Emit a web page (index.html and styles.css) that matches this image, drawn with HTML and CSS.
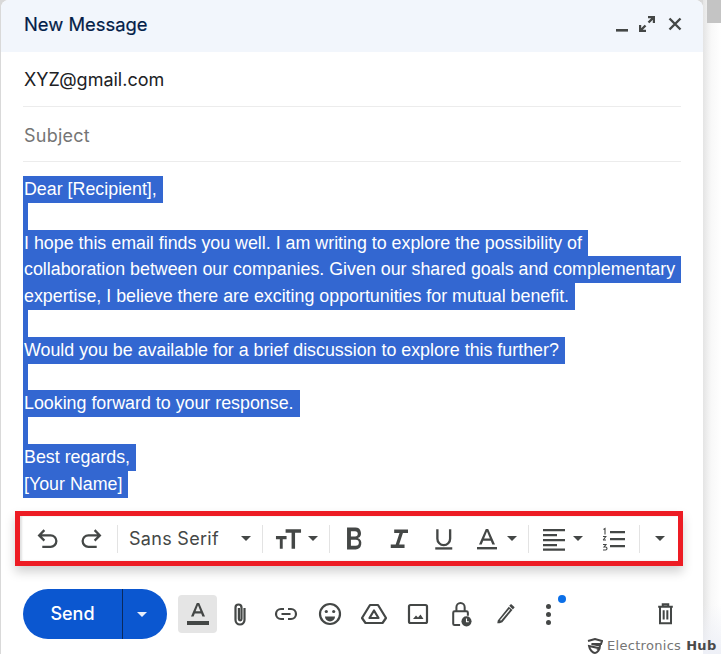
FILE: index.html
```html
<!DOCTYPE html>
<html lang="en">
<head>
<meta charset="utf-8">
<title>New Message</title>
<link rel="stylesheet" href="styles.css">
</head>
<body>
<div class="backdrop"><span class="corner"></span></div>
<main class="compose">
  <header class="head">
    <h1 class="title">New Message</h1>
    <div class="win">
      <svg class="w-min" viewBox="0 0 12 12"><rect x="0" y="9" width="12" height="2.6" fill="#444746"/></svg>
      <svg class="w-exp" viewBox="0 0 16 16"><path d="M9 1h6v6M15 1L9.5 6.5M7 15H1V9M1 15l5.5-5.5" fill="none" stroke="#444746" stroke-width="2.4"/></svg>
      <svg class="w-x" viewBox="0 0 14 14"><path d="M1.5 1.5l11 11M12.5 1.5l-11 11" fill="none" stroke="#444746" stroke-width="2.4"/></svg>
    </div>
  </header>
  <div class="field to">XYZ@gmail.com</div>
  <div class="field subject">Subject</div>
  <div class="body">
    <div class="ln"><span>Dear [Recipient],</span></div>
    <div class="ln blank"><span></span></div>
    <div class="ln"><span>I hope this email finds you well. I am writing to explore the possibility of</span></div>
    <div class="ln"><span>collaboration between our companies. Given our shared goals and complementary</span></div>
    <div class="ln"><span>expertise, I believe there are exciting opportunities for mutual benefit.</span></div>
    <div class="ln blank"><span></span></div>
    <div class="ln"><span>Would you be available for a brief discussion to explore this further?</span></div>
    <div class="ln blank"><span></span></div>
    <div class="ln"><span>Looking forward to your response.</span></div>
    <div class="ln blank"><span></span></div>
    <div class="ln"><span>Best regards,</span></div>
    <div class="ln"><span>[Your Name]</span></div>
  </div>
  <div class="toolbar">
    <button class="tb t-undo"><svg viewBox="0 0 24 24"><path d="M9 5L4 10l5 5M4.500 10H15a5.500 5.500 0 0 1 0 11H7" transform="translate(0 -1)" class="ic"/></svg></button>
    <button class="tb t-redo"><svg viewBox="0 0 24 24"><path d="M15 5l5 5-5 5M19.500 10H9a5.500 5.500 0 0 0 0 11h8" transform="translate(0 -1)" class="ic"/></svg></button>
    <i class="sep s1"></i>
    <div class="font">Sans Serif</div><i class="caret c-font"></i>
    <i class="sep"></i>
    <button class="tb t-size"><svg viewBox="0 0 28 24"><path d="M1 9h11v3.200H8V22H5v-9.800H1zM11 2h16v3.400h-6.200V22h-3.600V5.400H11z" fill="#444746"/></svg></button><i class="caret c-size"></i>
    <i class="sep"></i>
    <button class="tb t-b"><svg viewBox="0 0 24 24"><path d="M7 3.500h6.500a4.300 4.300 0 0 1 1.800 8.200 4.600 4.600 0 0 1-1.600 8.800H7zM10 6.300v4.200h3.200a2.100 2.100 0 0 0 0-4.200zM10 13v4.700h3.800a2.350 2.350 0 0 0 0-4.700z" fill="#444746" fill-rule="evenodd"/></svg></button>
    <button class="tb t-i"><svg viewBox="0 0 24 24"><path d="M8 4h12v3h-4.400l-3.300 10H17v3H5v-3h4.300l3.300-10H8z" fill="#444746"/></svg></button>
    <button class="tb t-u"><svg viewBox="0 0 24 24"><path d="M6 3v9a6 6 0 0 0 12 0V3" class="ic"/><rect x="4" y="20" width="16" height="2.200" fill="#444746"/></svg></button>
    <button class="tb t-a"><svg viewBox="0 0 24 24"><path d="M4 17.500L10.800 2h2.400L20 17.500h-2.700l-1.500-3.700H8.200l-1.500 3.700zM9.100 11.400h5.800L12 4.600z" fill="#444746" fill-rule="evenodd"/><rect x="2" y="20" width="20" height="2.400" fill="#444746"/></svg></button><i class="caret c-a"></i>
    <i class="sep"></i>
    <button class="tb t-al"><svg viewBox="0 0 24 24"><path d="M1 2h22v2.200H1zM1 7h14v2.200H1zM1 12h22v2.200H1zM1 17h14v2.200H1zM1 21.600h22v2.200H1z" fill="#444746"/></svg></button><i class="caret c-al"></i>
    <button class="tb t-ol"><svg viewBox="0 0 24 24"><path d="M8 4h15v2.200H8zM8 11h15v2.200H8zM8 18h15v2.200H8z" fill="#444746"/><path d="M1.500 2.500L3 1.500v6M1 13h3M1 9.500h2.800L1.200 13M1 17.500h3L2 20h1.500a1.400 1.400 0 0 1 0 3H1" fill="none" stroke="#444746" stroke-width="1.100"/></svg></button>
    <i class="sep s-last"></i>
    <i class="caret c-more"></i>
  </div>
  <footer class="foot">
    <div class="send"><span class="send-l">Send</span><span class="send-r"><i class="caret white"></i></span></div>
    <span class="fmt"><svg viewBox="0 0 24 24"><path d="M5 14.500L10.800 1h2.400L19 14.500h-2.600l-1.200-3.100H8.800l-1.200 3.100zM9.600 9.300h4.800L12 3.300z" fill="#444746" fill-rule="evenodd"/><rect x="1" y="19" width="22" height="4" fill="#444746"/></svg></span>
    <svg class="fi f-clip" viewBox="0 0 16 24"><path d="M12.500 6v12a4.500 4.500 0 0 1-9 0V5.500a3 3 0 0 1 6 0V17a1.300 1.300 0 0 1-2.600 0V6" class="ic2"/></svg>
    <svg class="fi f-link" viewBox="0 0 24 24"><path d="M10 7H7a5 5 0 0 0 0 10h3M14 7h3a5 5 0 0 1 0 10h-3M7.500 12h9" class="ic2"/></svg>
    <svg class="fi f-emoji" viewBox="0 0 24 24"><circle cx="12" cy="12" r="10" class="ic2"/><circle cx="8.300" cy="9.500" r="1.600" fill="#444746"/><circle cx="15.700" cy="9.500" r="1.600" fill="#444746"/><path d="M7 14.500h10a5 5 0 0 1-10 0z" fill="#444746"/></svg>
    <svg class="fi f-drive" viewBox="0 0 26 24"><path d="M9 3h8l8 13-3.500 5h-17L1 16zM13 8.500L8.500 16h9z" class="ic2" stroke-linejoin="round"/></svg>
    <svg class="fi f-img" viewBox="0 0 24 24"><rect x="3" y="3" width="18" height="18" rx="1.500" class="ic2"/><path d="M7 17l3-3.500 2 2 2.500-3 3 4.500z" fill="#444746"/></svg>
    <svg class="fi f-lock" viewBox="0 0 24 28"><path d="M11 26H5a1.500 1.500 0 0 1-1.500-1.500v-12A1.500 1.500 0 0 1 5 11h13a1.500 1.500 0 0 1 1.500 1.500V16M7 11V6.500a4.500 4.500 0 0 1 9 0V11" class="ic2"/><circle cx="18" cy="22" r="5.500" fill="#444746"/><path d="M18 19v3.500h2.500" fill="none" stroke="#fff" stroke-width="1.200"/></svg>
    <svg class="fi f-pen" viewBox="0 0 24 24"><path d="M5 22H2.500L3 19 15 4l4 3.500L8 21zM15.500 3l2-2 4 3.500-2 2.500z" fill="#444746"/><path d="M6 19L16 7" stroke="#fff" stroke-width="1.200"/></svg>
    <span class="more"><i></i><i></i><i></i><b class="dot"></b></span>
    <svg class="fi f-trash" viewBox="0 0 18 24"><path d="M1 4h16M6 4V1.500h6V4M3 4v18h12V4M7 8v10M11 8v10" class="ic2"/></svg>
  </footer>
</main>
<div class="brand"><svg viewBox="0 0 16 16"><path d="M1 3l7-2 7 2-1 3H4.500l8.500 1.500C13 12 10 15 8 15S2.500 12 2 8l9 2-1 1.500" fill="none" stroke="#444" stroke-width="2"/></svg><span class="b1">Electronics</span><b>Hub</b></div>
</body>
</html>
```
FILE: styles.css
```css
* { box-sizing: border-box; }
html, body { margin: 0; height: 654px; overflow: hidden; }
body { position: relative; background: #d9d9d9; font-family: "Liberation Sans", Arial, sans-serif; }
.backdrop { position: absolute; inset: 0 0 0 auto; width: 18px; background: linear-gradient(90deg, #e4e4e4, #f8f8f8 45%, #fff); }
.backdrop::after { content: ""; position: absolute; left: 0; right: 0; bottom: 0; height: 50px; background: linear-gradient(180deg, transparent, #eef0f7); }
.corner { position: absolute; top: 0; left: 4px; right: 0; height: 23px; background: #c4c4c4; }
.compose { position: relative; margin-left: 1px; width: 702px; height: 654px; background: #fff; border-radius: 8px 8px 0 0; overflow: hidden; }
.head { height: 52px; background: #f2f6fc; display: flex; align-items: center; justify-content: space-between; padding: 0 21px 4px 23px; }
.title { margin: 0; font: 400 18.400px/24px Inter, "Noto Sans", sans-serif; color: #041e49; -webkit-text-stroke: .2px #041e49; }
.win { display: flex; align-items: center; gap: 11px; }
.w-min { width: 12px; height: 12px; margin-top: 3px; }
.w-exp { width: 16px; height: 16px; }
.w-x { width: 14px; height: 14px; margin-left: 2px; }
.field { margin: 0 22px 0 22px; padding-left: 1px; border-bottom: 1px solid #ececec; font: 400 18px/24px Inter, "Noto Sans", sans-serif; }
.to { height: 55px; padding-top: 16px; color: #202124; }
.subject { height: 55px; padding-top: 17px; color: #757575; letter-spacing: .25px; }
.body { padding: 14px 0 0 22px; font-size: 17.830px; line-height: 26.800px; color: #fff; white-space: nowrap; }
.ln { height: 26.800px; }
.ln span { display: inline-block; height: 26.800px; background: #3367d1; padding-left: 1px; padding-right: 6px; vertical-align: top; }
.blank span { width: 5px; padding: 0; }
.toolbar { position: absolute; left: 14px; top: 511px; width: 668px; height: 55px; border: 5px solid #ed1c24; background: #fff; box-shadow: 0 6px 10px rgba(0,0,0,.18), inset 2px 0 2px rgba(0,0,0,.12); display: flex; align-items: center; }
.tb { border: 0; background: none; padding: 0; display: block; flex: none; }
.tb svg { display: block; width: 100%; height: 100%; }
.ic { fill: none; stroke: #444746; stroke-width: 2.200; }
.ic2 { fill: none; stroke: #444746; stroke-width: 2.200; }
.t-undo { width: 25px; height: 25px; margin-left: 15px; }
.t-redo { width: 25px; height: 25px; margin-left: 19px; }
.sep { display: block; flex: none; width: 1px; height: 28px; background: #e3e3e3; }
.s1 { margin-left: 13px; }
.font { flex: none; margin-left: 11px; width: 102px; font: 400 18px/24px Inter, "Noto Sans", sans-serif; color: #444746; letter-spacing: .3px; }
.caret { display: block; flex: none; width: 0; height: 0; border: 5px solid transparent; border-top: 5px solid #444746; border-bottom: 0; }
.c-font { margin-left: 10px; margin-right: 11px; }
.t-size { width: 27px; height: 24px; margin-left: 12px; }
.c-size { margin-left: 6px; margin-right: 11px; }
.t-b { width: 31px; height: 31px; margin-left: 8px; }
.t-i { width: 27.600px; height: 27.600px; margin-left: 16px; }
.t-u { width: 25.500px; height: 25.500px; margin-left: 18.400px; }
.t-a { width: 24px; height: 24px; margin-left: 18.500px; }
.c-a { margin-left: 8px; margin-right: 11px; }
.t-al { width: 24px; height: 24px; margin-left: 13px; }
.c-al { margin-left: 7px; }
.t-ol { width: 24px; height: 24px; margin-left: 19px; }
.s-last { margin-left: 13px; }
.c-more { margin-left: 15px; }
.foot { position: absolute; left: 22px; top: 589px; right: 0; height: 50px; display: flex; align-items: center; }
.send { display: flex; flex: none; width: 144px; height: 50px; border-radius: 25px; background: #0b57d0; color: #fff; font: 500 18px/50px Inter, "Noto Sans", sans-serif; overflow: hidden; }
.send-l { width: 100px; text-align: center; border-right: 1px solid #0a2a5e; }
.send-r { flex: 1; display: flex; align-items: center; justify-content: center; padding-right: 6px; }
.caret.white { border-top-color: #e8eefb; }
.fmt { flex: none; margin-left: 11px; width: 39px; height: 38px; border-radius: 4px; background: #e5e5e5; display: flex; align-items: center; justify-content: center; }
.fmt svg { width: 24px; height: 24px; }
.fi { display: block; flex: none; }
.f-clip { width: 16px; height: 24px; margin-left: 15px; }
.f-link { width: 24px; height: 24px; margin-left: 26px; }
.f-emoji { width: 24px; height: 24px; margin-left: 19.500px; }
.f-drive { width: 26px; height: 24px; margin-left: 19.500px; }
.f-img { width: 24px; height: 24px; margin-left: 18.700px; }
.f-lock { width: 22px; height: 26px; margin-left: 20.300px; }
.f-pen { width: 22px; height: 22px; margin-left: 23px; }
.more { position: relative; flex: none; display: flex; flex-direction: column; gap: 3px; margin-left: 29.500px; }
.more i { display: block; width: 5px; height: 5px; border-radius: 50%; background: #444746; }
.dot { position: absolute; left: 11.500px; top: -8.500px; width: 8px; height: 8px; border-radius: 50%; background: #0b6fe8; }
.f-trash { width: 17px; height: 22px; margin-left: 106px; }
.brand { position: absolute; left: 587px; top: 637px; display: flex; align-items: center; gap: 5px; font: 400 13px/17px "DejaVu Sans", sans-serif; color: #757575; letter-spacing: .3px; white-space: nowrap; }
.brand svg { width: 16px; height: 16px; margin-right: -1px; }
.brand b { color: #4a4a4a; font-weight: 700; }
```
